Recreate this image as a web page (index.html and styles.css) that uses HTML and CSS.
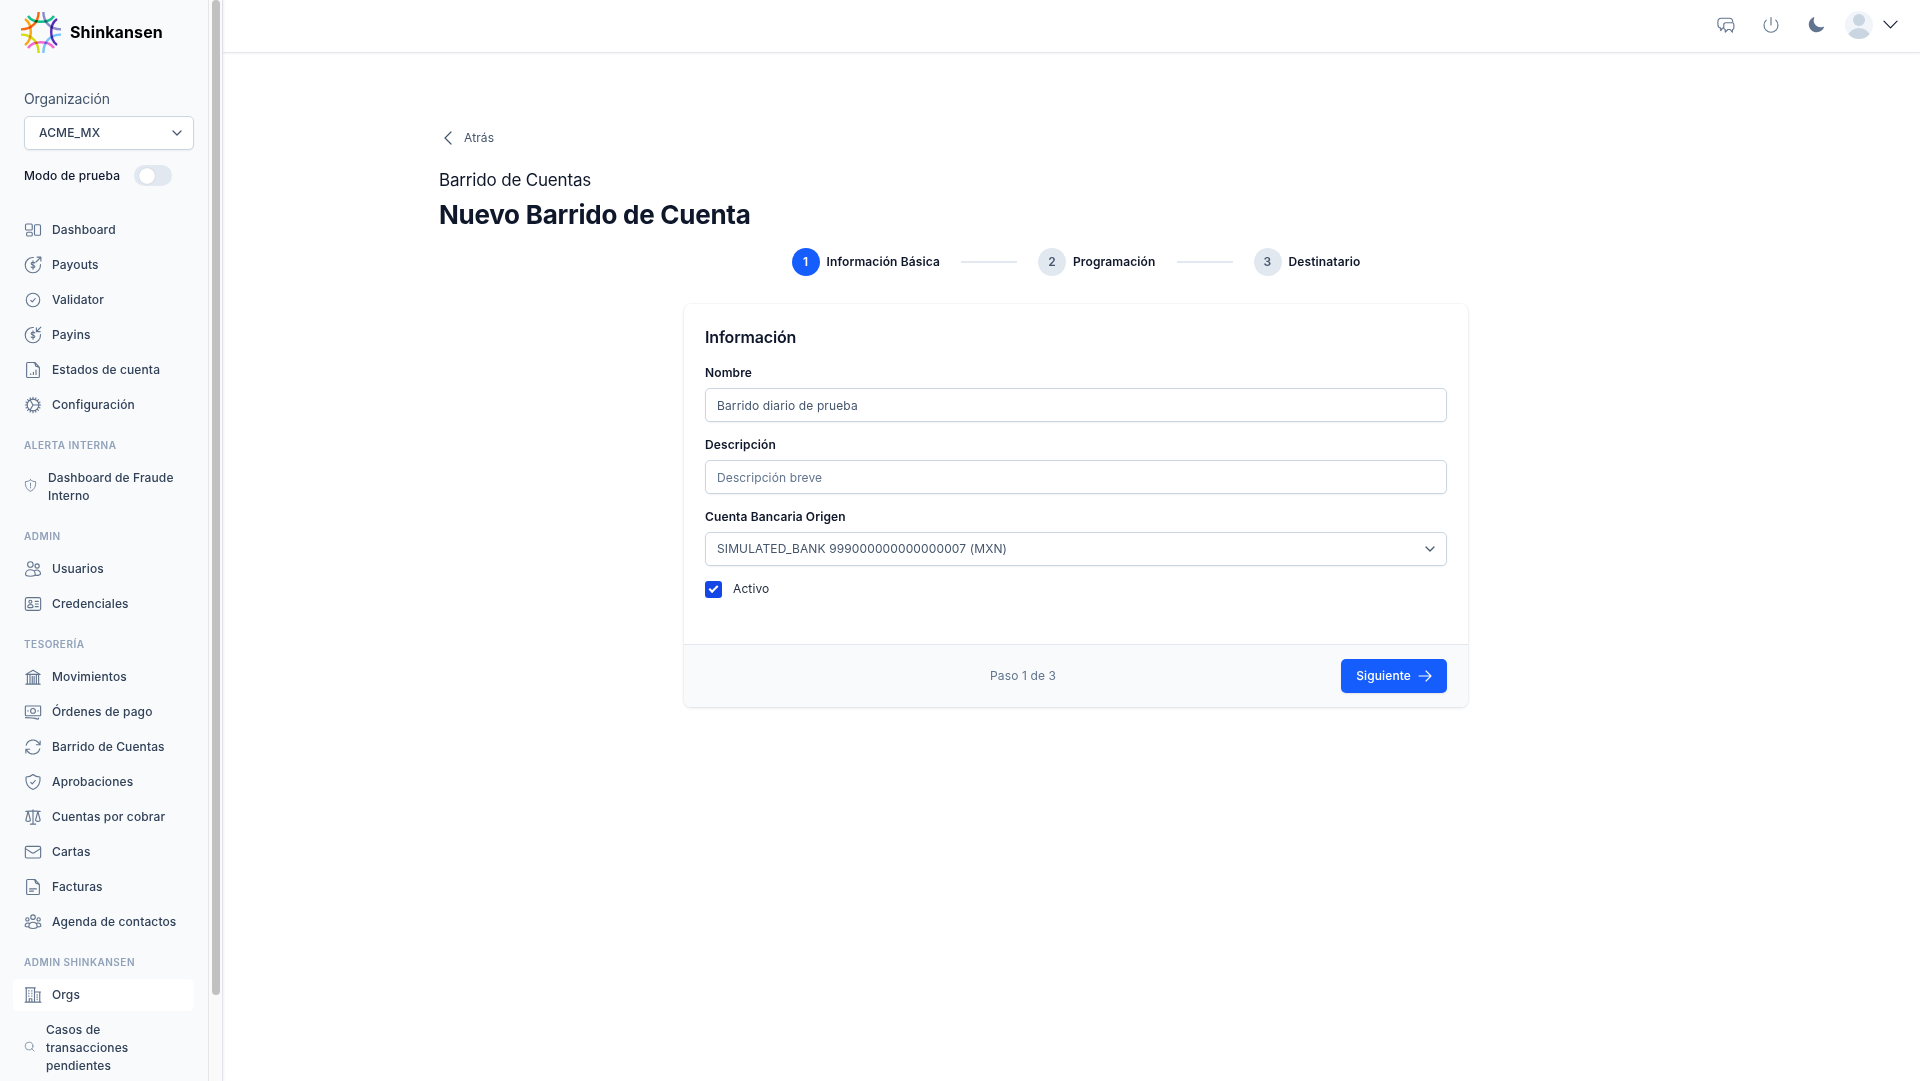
FILE: index.html
```html
<!DOCTYPE html>
<html lang="es">
<head>
<meta charset="utf-8">
<meta name="viewport" content="width=device-width, initial-scale=1">
<title>Shinkansen – Nuevo Barrido de Cuenta</title>
<link rel="stylesheet" href="styles.css">
</head>
<body>
<div class="app">
  <aside class="sidebar">
    <div class="sidebar-content">
      <a class="brand" href="#">
        <svg class="brand-mark" viewBox="0 0 42 42" aria-hidden="true">
          <g fill="none" stroke-width="2.4" stroke-linecap="butt">
            <path stroke="#12c48b" d="M8 5Q12 10.800 21 10.800T34 5"/>
            <path stroke="#8b8fc9" d="M23.400 1C23.400 11 30 18.400 41 18.400"/>
            <path stroke="#5b2db8" d="M37 8Q31.200 12 31.200 21T37 34"/>
            <path stroke="#7cc8ff" d="M41 23.600C30 23.600 23.400 31 23.400 42"/>
            <path stroke="#fb6bd0" d="M34 37Q30 31.200 21 31.200T8 37"/>
            <path stroke="#d9e310" d="M18.600 42C18.600 31 12 23.600 1 23.600"/>
            <path stroke="#ffab12" d="M5 34Q10.800 30 10.800 21T5 8"/>
            <path stroke="#ff6a13" d="M1 18.400C12 18.400 18.600 11 18.600 1"/>
          </g>
        </svg>
        <span>Shinkansen</span>
      </a>

      <div class="org">
        <label class="org-label" for="org">Organización</label>
        <div class="select-wrap">
          <select class="control org-select" id="org"><option>ACME_MX</option></select>
          <svg class="chevron" viewBox="0 0 10 6"><path d="M1 1l4 4 4-4"/></svg>
        </div>
        <div class="mode">
          <label for="mode">Modo de prueba</label>
          <input class="switch" type="checkbox" role="switch" id="mode">
        </div>
      </div>

      <nav class="nav">
        <div class="nav-group">
          <a class="nav-item" href="#"><svg class="icon" viewBox="0 0 24 24"><rect x="2" y="4" width="9" height="8" rx="1.500"/><rect x="3.500" y="15" width="7.500" height="5" rx="1.500"/><rect x="14" y="5" width="8" height="14" rx="1.500"/></svg>Dashboard</a>
          <a class="nav-item" href="#"><svg class="icon" viewBox="0 0 24 24"><path d="M12.500 2A10.200 10.200 0 1 0 22 11.500M12 6.500v11M14.500 9.200c-1-1.400-5-1.200-5 .8 0 2.400 5 1.400 5 4 0 2-4 2.200-5 .6M16 8l6.500-6.500M17.500 1.500h5v5"/></svg>Payouts</a>
          <a class="nav-item" href="#"><svg class="icon" viewBox="0 0 24 24"><circle cx="12" cy="12" r="9"/><path d="M9 12.500l2 2 4-4.500"/></svg>Validator</a>
          <a class="nav-item" href="#"><svg class="icon" viewBox="0 0 24 24"><path d="M12.500 2A10.200 10.200 0 1 0 22 11.500M12 6.500v11M14.500 9.200c-1-1.400-5-1.200-5 .8 0 2.400 5 1.400 5 4 0 2-4 2.200-5 .6M22.500 1.500l-5.500 5.500M16.500 2.500v5h5"/></svg>Payins</a>
          <a class="nav-item" href="#"><svg class="icon" viewBox="0 0 24 24"><path d="M14.500 2H5a1.500 1.500 0 0 0-1.500 1.500v17A1.500 1.500 0 0 0 5 22h14a1.500 1.500 0 0 0 1.500-1.500V8.500zM12 2c3 0 3 1 3 3s1 2.500 2.500 2.500S20.500 8 20.500 10M9 18v-1M12.500 18v-3M16 18v-6"/></svg>Estados de cuenta</a>
          <a class="nav-item" href="#"><svg class="icon" viewBox="0 0 24 24"><circle cx="12" cy="12" r="7.800"/><path d="M12 1.800v2.400M12 19.800v2.400M1.800 12h2.400M19.800 12h2.400M4.800 4.800l1.700 1.700M17.500 17.500l1.700 1.700M4.800 19.200l1.700-1.700M17.500 6.500l1.700-1.700M8.100 2.600l.8 2.200M15.100 19.200l.8 2.200M2.600 15.900l2.200-.8M19.200 8.900l2.200-.8M2.600 8.100l2.200.8M19.200 15.100l2.200.8M8.100 21.400l.8-2.200M15.100 4.800l.8-2.200M8.200 5.400l3.800 6.600-3.800 6.600M12 12h7.800"/></svg>Configuración</a>
        </div>

        <h2 class="nav-title">Alerta interna</h2>
        <div class="nav-group">
          <a class="nav-item nav-item-small" href="#"><svg class="icon" viewBox="0 0 24 24"><path d="M12 1.500c2.500 2.200 5.500 3.300 9.300 3.300C22.300 13 19 20 12 22.500 5 20 1.700 13 2.700 4.800c3.800 0 6.800-1.100 9.300-3.300zM12 7.500v5.500M12 15.500v1"/></svg>Dashboard de Fraude Interno</a>
        </div>

        <h2 class="nav-title">Admin</h2>
        <div class="nav-group">
          <a class="nav-item" href="#"><svg class="icon" viewBox="0 0 24 24"><circle cx="8.500" cy="6" r="3.700"/><circle cx="17.500" cy="8" r="2.800"/><path d="M2 19c0-8 13-8 13 0 0 3.500-13 3.500-13 0zM14 14.200c3.500-2 8-.2 8 4 0 2-4 2.600-7 2"/></svg>Usuarios</a>
          <a class="nav-item" href="#"><svg class="icon" viewBox="0 0 24 24"><rect x="1.800" y="3.500" width="20.400" height="17" rx="2.500"/><circle cx="8.500" cy="9" r="2"/><path d="M5 16c0-4.500 7-4.500 7 0 0 1.300-7 1.300-7 0zM15 8.500h4M15 12h4M15 15.500h4"/></svg>Credenciales</a>
        </div>

        <h2 class="nav-title">Tesorería</h2>
        <div class="nav-group">
          <a class="nav-item" href="#"><svg class="icon" viewBox="0 0 24 24"><path d="M2.500 8.500L12 3l9.500 5.500zM2.500 21.500h19M4.500 9v12M8 9v12M11 11v10M13.500 11v10M16.500 9v12M19.500 9v12"/></svg>Movimientos</a>
          <a class="nav-item" href="#"><svg class="icon" viewBox="0 0 24 24"><rect x="1.800" y="4" width="20.400" height="13" rx="1"/><circle cx="12" cy="10.500" r="3.200"/><path d="M5 10.500h.5M18.500 10.500h.5M2 19.500c6 0 11 .3 16 2 1 .2 1.500-.3 1.500-1.500"/></svg>Órdenes de pago</a>
          <a class="nav-item" href="#"><svg class="icon" viewBox="0 0 24 24"><path d="M16.500 9h5V4M3 9.500a9.300 9.300 0 0 1 16.500-3l2 2.500M7.500 15h-5v5M21 14.500a9.300 9.300 0 0 1-16.500 3l-2-2.500"/></svg>Barrido de Cuentas</a>
          <a class="nav-item" href="#"><svg class="icon" viewBox="0 0 24 24"><path d="M12 2c2.500 2.200 5.500 3.300 9.300 3.300C22.300 13 19 20 12 22 5 20 1.700 13 2.700 5.300c3.800 0 6.800-1.100 9.300-3.300zM9 12.500l2 2 4-4.500"/></svg>Aprobaciones</a>
          <a class="nav-item" href="#"><svg class="icon" viewBox="0 0 24 24"><path d="M12 2.500v19M8.500 21.500h7M2.500 4.500C6 4.500 9 4 12 4s6 .5 9.500.5M5.500 4.500L2.500 16c0 2.500 6 2.500 6 0zM18.500 4.500l-3 11.500c0 2.500 6 2.500 6 0z"/></svg>Cuentas por cobrar</a>
          <a class="nav-item" href="#"><svg class="icon" viewBox="0 0 24 24"><rect x="1.800" y="4.500" width="20.400" height="15.500" rx="2"/><path d="M2 7.500l8.500 5.500q1.500 1 3 0L22 7.500"/></svg>Cartas</a>
          <a class="nav-item" href="#"><svg class="icon" viewBox="0 0 24 24"><path d="M14.500 2H5a1.500 1.500 0 0 0-1.500 1.500v17A1.500 1.500 0 0 0 5 22h14a1.500 1.500 0 0 0 1.500-1.500V8.500zM12 2c3 0 3 1 3 3s1 2.500 2.500 2.500S20.500 8 20.500 10M7.500 14.500h9M7.500 17.500h5"/></svg>Facturas</a>
          <a class="nav-item" href="#"><svg class="icon" viewBox="0 0 24 24"><circle cx="12" cy="5.500" r="3"/><circle cx="4.500" cy="8.500" r="2.200"/><circle cx="19.500" cy="8.500" r="2.200"/><path d="M6.500 18c0-7.500 11-7.500 11 0 0 3.500-11 3.500-11 0zM6.500 13.500c-3-.8-5 1-5 4 .8.800 2.500 1 4.500 1M17.500 13.500c3-.8 5 1 5 4-.8.800-2.500 1-4.500 1"/></svg>Agenda de contactos</a>
        </div>

        <h2 class="nav-title">Admin Shinkansen</h2>
        <div class="nav-group">
          <a class="nav-item nav-item-active" href="#" aria-current="page"><svg class="icon" viewBox="0 0 24 24"><path d="M1.500 21.500h21M3 21.500v-19M14 21.500v-19M2 2.500h13M14 8h8M21 8v13.500M7 21.500V17h3.500v4.500M6.500 6v.8M10.500 6v.8M6.500 9.500v.8M10.500 9.500v.8M6.500 13v.8M10.500 13v.8M17.500 11.500v.8M17.500 14.500v.8M17.500 17.500v.8"/></svg>Orgs</a>
          <a class="nav-item nav-item-small nav-item-tiny" href="#"><svg class="icon" viewBox="0 0 24 24"><circle cx="11" cy="11" r="8.500"/><path d="M17 17l5 5"/></svg>Casos de transacciones pendientes</a>
        </div>
      </nav>
    </div>
    <div class="scrolltrack"><div class="scrollthumb"></div></div>
  </aside>

  <div class="page">
    <header class="topbar">
      <button class="icon-button" type="button" aria-label="Mensajes"><svg class="icon" viewBox="0 0 24 24"><path d="M8.500 16H7.500L5 19.500V16C2.500 15.500 1.200 14 1.200 11.500V7.500c0-3 1.500-4.500 4.500-4.500h11c2.500 0 4 1.300 4.300 4.500M12 9h8q2.500 0 2.500 2.500v4q0 2.500-2 2.500v3.500L17.500 18h-3L11 21.500V18q-2-.5-2-2.500v-4Q9 9 12 9z"/></svg></button>
      <button class="icon-button" type="button" aria-label="Cerrar sesión"><svg class="icon" viewBox="0 0 24 24"><path d="M5.600 5.600a9.300 9.300 0 1 0 12.800 0M12 2v10"/></svg></button>
      <button class="icon-button" type="button" aria-label="Modo oscuro"><svg class="icon icon-solid" viewBox="0 0 24 24"><path d="M9.500 1.700a.75.75 0 0 1 .2.800 9 9 0 0 0 11.800 11.800.75.75 0 0 1 1 1A10.500 10.500 0 1 1 8.700 1.500a.75.75 0 0 1 .8.200z"/></svg></button>
      <button class="profile" type="button" aria-label="Perfil">
        <svg class="avatar" viewBox="0 0 28 28"><defs><clipPath id="round"><circle cx="14" cy="14" r="14"/></clipPath></defs><g clip-path="url(#round)"><path fill="#f1f5f9" d="M0 0h28v28H0z"/><circle cx="14" cy="9" r="6" fill="#cad5e2"/><ellipse cx="14" cy="26" rx="11" ry="9" fill="#cad5e2"/></g></svg>
        <svg class="profile-chevron" viewBox="0 0 16 9"><path d="M1 1l7 7 7-7"/></svg>
      </button>
    </header>

    <main class="main">
      <div class="container">
        <a class="back" href="#"><svg viewBox="0 0 18 18"><path d="M12 3L6 9l6 6"/></svg>Atrás</a>
        <p class="section-name">Barrido de Cuentas</p>
        <h1 class="title">Nuevo Barrido de Cuenta</h1>

        <ol class="steps">
          <li class="step"><span class="step-number step-number-current">1</span>Información Básica</li>
          <li class="step-line" role="presentation"></li>
          <li class="step"><span class="step-number">2</span>Programación</li>
          <li class="step-line" role="presentation"></li>
          <li class="step"><span class="step-number">3</span>Destinatario</li>
        </ol>

        <form class="card">
          <div class="card-body">
            <h2 class="card-title">Información</h2>
            <div class="field">
              <label for="name">Nombre</label>
              <input class="control" id="name" type="text" value="Barrido diario de prueba">
            </div>
            <div class="field">
              <label for="description">Descripción</label>
              <input class="control" id="description" type="text" placeholder="Descripción breve">
            </div>
            <div class="field">
              <label for="account">Cuenta Bancaria Origen</label>
              <div class="select-wrap">
                <select class="control" id="account"><option>SIMULATED_BANK 999000000000000007 (MXN)</option></select>
                <svg class="chevron" viewBox="0 0 10 6"><path d="M1 1l4 4 4-4"/></svg>
              </div>
            </div>
            <label class="check"><input type="checkbox" checked>Activo</label>
          </div>
          <div class="card-footer">
            <span></span>
            <span>Paso 1 de 3</span>
            <button class="next" type="button">Siguiente <svg viewBox="0 0 14 14"><path d="M1 7h12M8 2l5 5-5 5"/></svg></button>
          </div>
        </form>
      </div>
    </main>
  </div>
</div>
</body>
</html>
```
FILE: styles.css
```css
*, *::before, *::after { box-sizing: border-box; }

body {
  margin: 0;
  font-family: Inter, "Liberation Sans", sans-serif;
  font-size: 12px;
  line-height: 18px;
  letter-spacing: 0.01em;
  color: #0f172b;
  background: #fff;
}

h1, h2, p, ol { margin: 0; padding: 0; }
ol { list-style: none; }
a { color: inherit; text-decoration: none; }
button, input, select { font: inherit; letter-spacing: inherit; color: inherit; }
button { border: 0; padding: 0; background: none; cursor: pointer; }
svg { display: block; flex: none; fill: none; stroke: currentColor; stroke-linecap: round; stroke-linejoin: round; }

.app { display: flex; height: 100vh; }

/* Sidebar */
.sidebar {
  display: flex;
  flex: none;
  width: 223px;
  background: #f8fafc;
  border-right: 1px solid #e2e5e9;
  box-shadow: 0 0 3px rgba(15, 23, 42, 0.12);
}
.sidebar-content { flex: 1; overflow-y: auto; scrollbar-width: none; padding: 11px 14px 14px 13px; }
.scrolltrack { width: 14px; padding: 0 2px 0 3px; background: #fafafa; border-left: 1px solid #e6e6e6; }
.scrollthumb { height: 92%; border-radius: 4px; background: #c1c1c1; }

.brand {
  display: flex;
  align-items: center;
  gap: 8px;
  margin-left: 7px;
  font-size: 16px;
  font-weight: 700;
  color: #000;
}
.brand-mark { width: 42px; height: 42px; }
.brand-mark path { mix-blend-mode: multiply; }

.org { padding: 36px 0 28px 11px; }
.org-label { display: block; margin-bottom: 7px; font-size: 14px; line-height: 20px; letter-spacing: -0.01em; color: #45556c; }
.mode { display: flex; align-items: center; gap: 14px; margin-top: 15px; font-weight: 500; }

.switch {
  appearance: none;
  display: flex;
  align-items: center;
  width: 38px;
  height: 21px;
  margin: 0;
  padding: 0 5px;
  border-radius: 11px;
  background: #e2e8f0;
}
.switch::before { content: ""; width: 16px; height: 16px; border-radius: 50%; background: #fff; box-shadow: 0 0 1px rgba(15, 23, 42, 0.3); }

.nav-group { display: grid; gap: 3px; }
.nav-title { margin: 15px 0 8px 11px; font-size: 10px; font-weight: 600; letter-spacing: 0.05em; text-transform: uppercase; color: #90a1b9; }
.nav-item {
  display: flex;
  align-items: center;
  gap: 10px;
  padding: 7px 11px;
  border-radius: 5px;
  font-weight: 500;
  color: #314158;
}
.nav-item-active { background: #fff; }
.icon { width: 18px; height: 18px; stroke-width: 1.5; color: #62748e; }
.icon-solid { fill: currentColor; stroke: none; }
.nav-item-small { gap: 11px; }
.nav-item-small .icon { width: 13px; height: 13px; margin-bottom: 4px; }
.nav-item-tiny .icon { width: 11px; height: 11px; }

/* Top bar */
.page { flex: 1; display: flex; flex-direction: column; min-width: 0; }
.topbar {
  display: flex;
  align-items: center;
  justify-content: flex-end;
  gap: 27px;
  height: 53px;
  padding: 0 22px 3px 0;
  border-bottom: 1px solid #e2e5e9;
  box-shadow: 0 1px 2px rgba(15, 23, 42, 0.05);
}
.profile { display: flex; align-items: center; gap: 10px; margin-left: -7px; }
.avatar { width: 28px; height: 28px; stroke: none; }
.profile-chevron { width: 15px; height: 9px; stroke-width: 1.2; color: #0f172b; }

/* Form page */
.main { flex: 1; padding: 70px 24px 40px 33px; overflow-y: auto; scrollbar-width: none; }
.container { max-width: 1274px; margin: 0 auto; }
.back { display: inline-flex; align-items: center; gap: 7px; padding: 6px 0; color: #45556c; }
.back svg { width: 18px; height: 18px; stroke-width: 1.2; }
.section-name { margin-top: 14px; font-size: 17px; line-height: 26px; letter-spacing: -0.01em; }
.title { margin-top: 6px; font-size: 26px; font-weight: 700; line-height: 32px; letter-spacing: -0.01em; }

.steps { display: flex; align-items: center; justify-content: center; gap: 21px; margin-top: 17px; }
.step { display: flex; align-items: center; gap: 7px; font-weight: 600; }
.step-number { display: grid; place-items: center; width: 28px; height: 28px; border-radius: 50%; color: #45556c; background: #e2e8f0; }
.step-number-current { color: #fff; background: #155dfc; }
.step-line { width: 56px; height: 2px; background: #e2e8f0; }

.card {
  max-width: 784px;
  margin: 28px auto 0;
  border-radius: 7px;
  overflow: hidden;
  box-shadow: 0 0 0 1px rgba(15, 23, 42, 0.02), 0 1px 3px rgba(15, 23, 42, 0.12);
}
.card-body { display: grid; gap: 14px; padding: 21px 21px 46px; }
.card-title { font-size: 16px; font-weight: 600; line-height: 25px; letter-spacing: -0.01em; }
.field { display: grid; gap: 6px; }
.field label { font-weight: 600; }

.control {
  display: block;
  width: 100%;
  height: 34px;
  padding: 0 11px;
  border: 1px solid #cad5e2;
  border-radius: 5px;
  color: #45556c;
  background: #fff;
  box-shadow: 0 1px 2px rgba(15, 23, 42, 0.06);
  appearance: none;
}
.control::placeholder { color: #62748e; opacity: 1; }
.org-select { padding: 0 14px; font-weight: 500; color: #314158; }
.select-wrap { display: grid; align-items: center; }
.select-wrap > * { grid-area: 1 / 1; }
.chevron { width: 10px; height: 6px; margin-right: 12px; justify-self: end; stroke-width: 1.2; color: #45556c; pointer-events: none; }

.check { display: flex; align-items: center; gap: 11px; color: #1d293d; }
.check input { appearance: none; width: 17px; height: 17px; margin: 0; border-radius: 3px; background: #1447e6; display: grid; place-items: center; }
.check input:checked::before { content: ""; width: 9px; height: 5px; border: solid #fff; border-width: 0 0 2px 2px; transform: rotate(-45deg) translate(1px, -1px); }

.card-footer {
  display: flex;
  align-items: center;
  justify-content: space-between;
  padding: 14px 21px;
  border-top: 1px solid #e2e8f0;
  color: #62748e;
  background: #f8fafc;
}
.next {
  display: flex;
  align-items: center;
  gap: 7px;
  height: 34px;
  padding: 0 15px;
  border-radius: 5px;
  font-weight: 500;
  color: #fff;
  background: #155dfc;
  box-shadow: 0 1px 2px rgba(15, 23, 42, 0.1);
}
.next svg { width: 14px; height: 14px; stroke-width: 1.1; }
```
